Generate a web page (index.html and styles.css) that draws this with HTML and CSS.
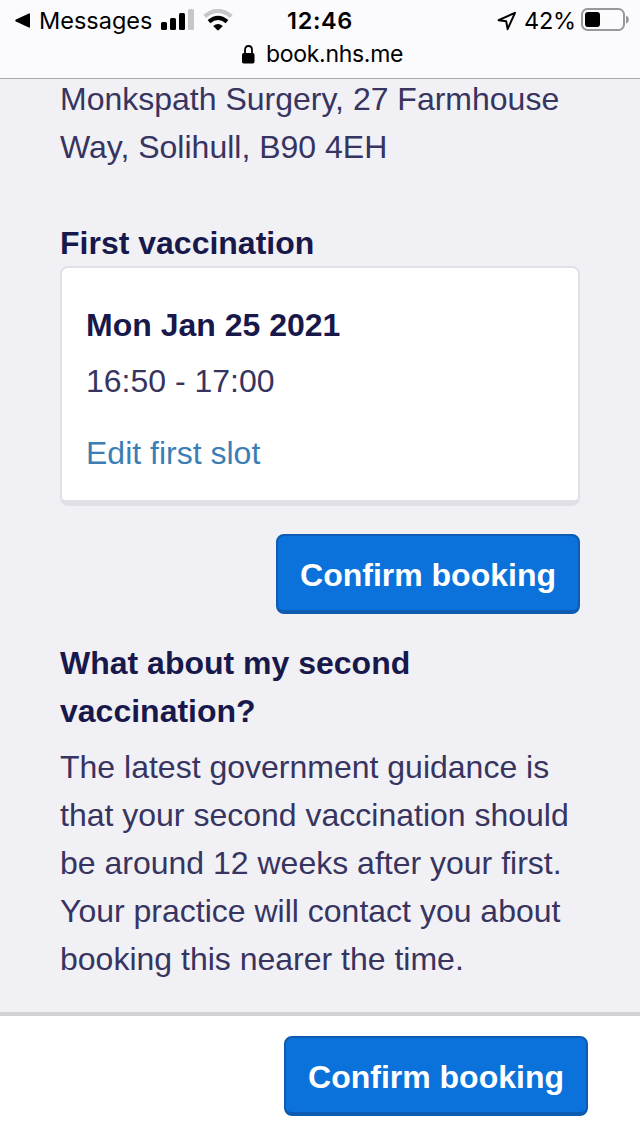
FILE: index.html
```html
<!DOCTYPE html>
<html lang="en">
<head>
<meta charset="utf-8">
<meta name="viewport" content="width=device-width">
<title>Confirm booking</title>
<link rel="stylesheet" href="styles.css">
</head>
<body>
<header class="browser-bar">
  <div class="status">
    <div class="status-left">
      <svg class="back" width="16" height="16" viewBox="0 0 16 16"><path d="M1 6.6 13.8.5Q15 0 15 1.2V13.8Q15 15 13.8 14.5L1 8.4Q-.6 7.5 1 6.6Z"/></svg>
      <span class="app">Messages</span>
      <svg class="signal" width="34" height="22" viewBox="0 0 34 22"><rect y="13" width="6" height="8" rx="1.5"/><rect x="9" y="9" width="6" height="12" rx="1.5"/><rect x="18" y="4" width="6" height="17" rx="1.5"/><rect x="27" width="6" height="21" rx="1.5" fill="#c7c7c9"/></svg>
      <svg class="wifi" width="30" height="22" viewBox="0 0 30 22"><g fill="none" stroke-width="4.2"><path d="M1.7 7.4Q15-3.6 28.3 7.4" stroke="#c7c7c9"/><path d="M6 12.6Q15 5.2 24 12.6" stroke="#000"/></g><path d="M10.2 16.9Q15 13.1 19.8 16.9L15.8 21Q15 21.8 14.2 21Z"/></svg>
    </div>
    <span class="clock">12:46</span>
    <div class="status-right">
      <svg class="location" width="20" height="20" viewBox="0 0 20 20"><path d="M18 1.8 1.6 9.2 9.2 10.3 10.6 18.2Z" fill="none" stroke="#000" stroke-width="2" stroke-linejoin="round"/></svg>
      <span class="percent">42%</span>
      <svg class="battery" width="49" height="24" viewBox="0 0 49 24"><rect x="1" y="1" width="42" height="21" rx="5.5" fill="none" stroke="#98989b" stroke-width="2"/><rect x="4" y="4" width="15" height="15" rx="3"/><path d="M45 7.5Q47.8 8.5 47.8 11.5T45 15.5Z" fill="#98989b"/></svg>
    </div>
  </div>
  <div class="address">
    <svg width="13" height="19" viewBox="0 0 13 19"><path d="M3 9V5Q3 1 6.5 1T10 5V9" fill="none" stroke="#000" stroke-width="1.8"/><rect y="8" width="12.5" height="10.5" rx="1.7"/></svg>
    <span class="host">book.nhs.me</span>
  </div>
</header>
<main class="content">
  <p class="text">Monkspath Surgery, 27 Farmhouse<br>Way, Solihull, B90 4EH</p>
  <h2 class="heading first">First vaccination</h2>
  <section class="card">
    <h3 class="heading">Mon Jan 25 2021</h3>
    <p class="text time">16:50 - 17:00</p>
    <a class="edit">Edit first slot</a>
  </section>
  <div class="action"><button class="button">Confirm booking</button></div>
  <h2 class="heading second">What about my second<br>vaccination?</h2>
  <p class="text guidance">The latest government guidance is<br>that your second vaccination should<br>be around 12 weeks after your first.<br>Your practice will contact you about<br>booking this nearer the time.</p>
</main>
<footer class="footer"><button class="button">Confirm booking</button></footer>
</body>
</html>
```
FILE: styles.css
```css
* { box-sizing: border-box; }
body {
  margin: 0;
  height: 1136px;
  display: flex;
  flex-direction: column;
  overflow: hidden;
  background: #f0f0f5;
  font: 32px/48px "Liberation Sans", Arial, sans-serif;
}
.browser-bar {
  position: relative;
  z-index: 1;
  flex: none;
  height: 79px;
  background: #fbfbfd;
  border-bottom: 1px solid #a9a9ad;
  color: #000;
  font-family: Inter, sans-serif;
}
svg { display: block; flex: none; }
.status {
  display: grid;
  grid-template-columns: 1fr 70px 1fr;
  height: 41px;
  line-height: 42px;
  white-space: nowrap;
}
.status-left, .status-right { display: flex; align-items: flex-start; }
.status-left { padding-left: 15px; }
.status-right { justify-content: flex-end; padding-right: 10px; }
.back { margin-top: 13px; }
.app { width: 121px; padding-left: 8px; font-size: 23.5px; letter-spacing: 0; }
.signal { margin: 9px 0 0 9px; }
.wifi { margin: 9px 0 0 8px; }
.clock { text-align: center; font-size: 23.5px; font-weight: 600; letter-spacing: .6px; }
.location { margin: 11px 7px 0 0; }
.percent { width: 51px; font-size: 23.5px; letter-spacing: -.2px; }
.battery { margin: 8px 0 0 6px; }
.status-right { padding-right: 10px; }
.status-right .battery { margin-right: 0; }
.address {
  display: flex;
  gap: 11px;
  padding-left: 242px;
  line-height: 26px;
  font-size: 23px;
}
.address svg { margin-top: 4px; }
.host { letter-spacing: -.3px; }
.content { flex: 1; margin-top: -4px; padding: 0 60px; }
.text, .heading { margin: 0; white-space: nowrap; }
.text { color: #37345f; }
.heading { color: #18184b; font-size: 32px; font-weight: 700; }
.first { margin-top: 48px; }
.card {
  height: 240px;
  margin-top: -1px;
  padding: 33px 24px 0;
  background: #fff;
  border: 2px solid #e0e0e9;
  border-bottom-width: 6px;
  border-radius: 8px;
}
.time { margin-top: 8px; }
.edit { display: block; margin-top: 24px; color: #3b7eb3; }
.action { display: flex; justify-content: flex-end; margin-top: 28px; }
.button {
  width: 304px;
  height: 80px;
  padding: 4px 0 0;
  background: #0c72db;
  border: 2px solid #0d5cb1;
  border-bottom-width: 4px;
  border-radius: 8px;
  color: #fff;
  font: 700 32px/48px "Liberation Sans", Arial, sans-serif;
  white-space: nowrap;
}
.second { margin-top: 25px; }
.guidance { margin-top: 8px; }
.footer {
  display: flex;
  justify-content: flex-end;
  flex: none;
  height: 124px;
  padding: 20px 52px 0 0;
  background: #fff;
  border-top: 4px solid #d2d2d4;
}
```
